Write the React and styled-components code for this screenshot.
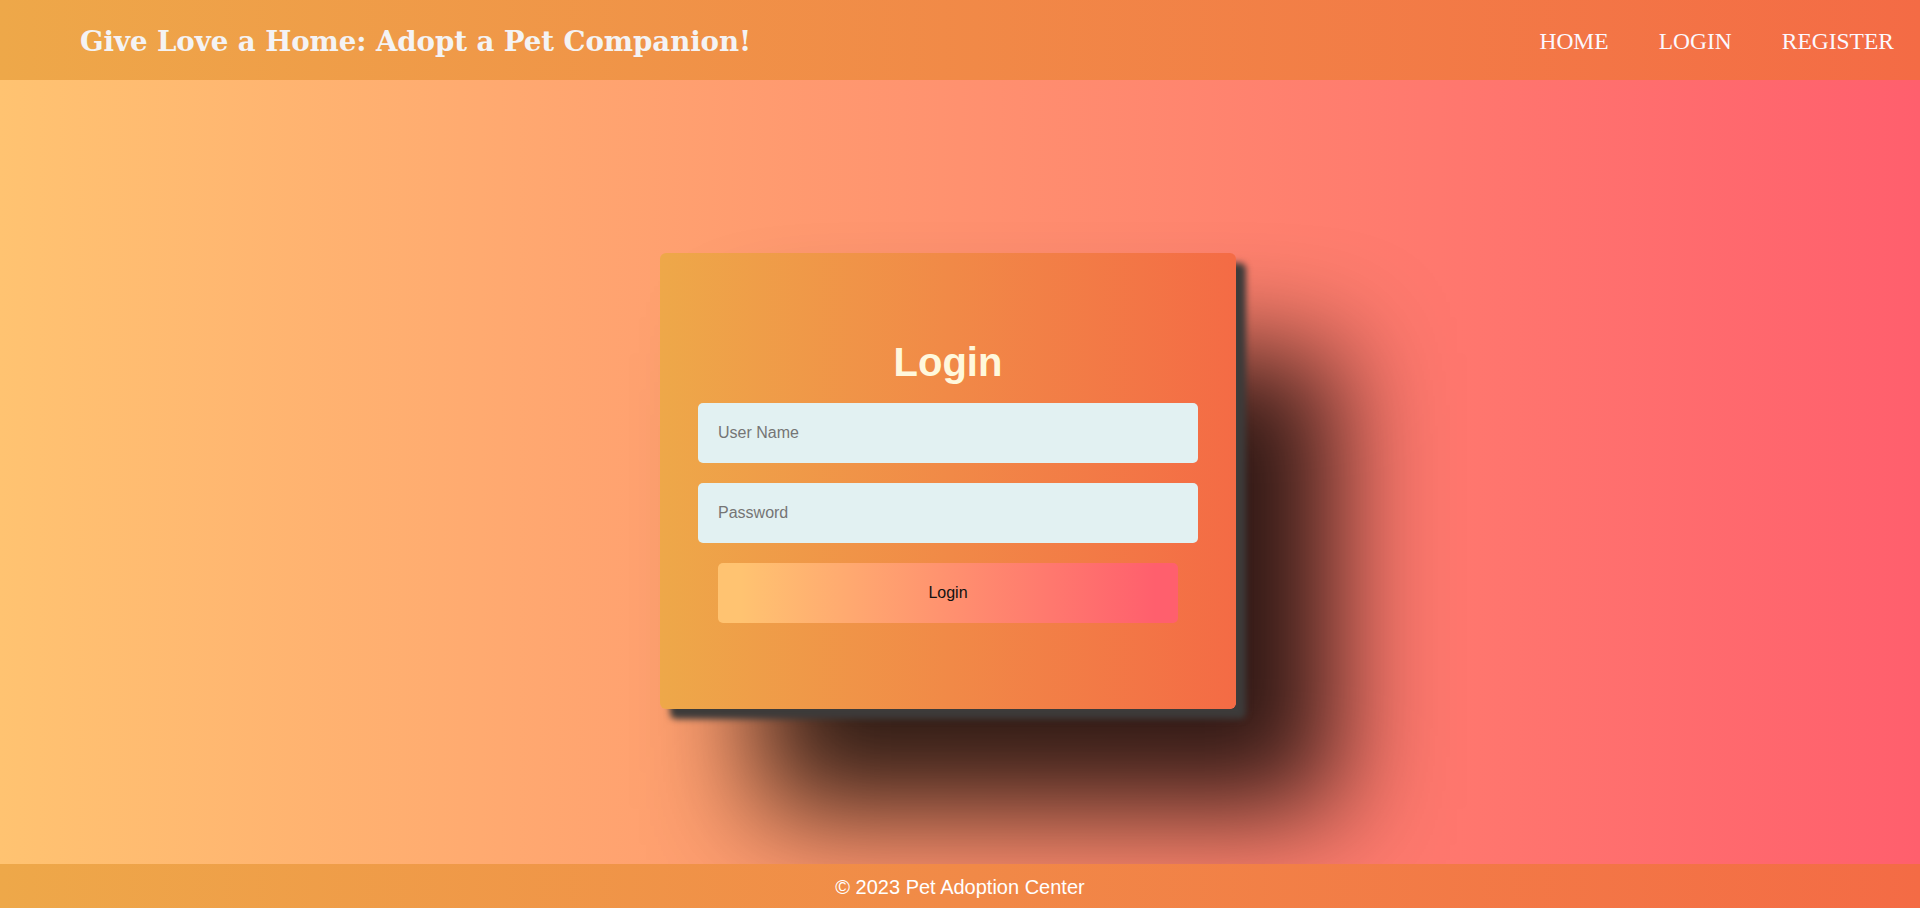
import React from "react";
import styled, { createGlobalStyle } from "styled-components";

const GlobalStyle = createGlobalStyle`
  * { box-sizing: border-box; }
  html, body { margin: 0; padding: 0; }
  body {
    font-family: "Liberation Sans", Arial, sans-serif;
    overflow: hidden;
  }
`;

const Page = styled.div`
  display: flex;
  flex-direction: column;
  height: 100vh;
  background: linear-gradient(to right, #ffc371, #ff5f6d);
`;

const Header = styled.header`
  display: flex;
  align-items: center;
  justify-content: space-between;
  height: 80px;
  padding: 3px 0 0 80px;
  background: linear-gradient(to right, #eea849, #f46b45);
`;

const Brand = styled.h1`
  margin: 0;
  font-family: "DejaVu Serif", Georgia, serif;
  font-weight: bold;
  font-size: 27.7px;
  letter-spacing: -0.1px;
  color: #f4f3f4;
`;

const Nav = styled.nav`
  display: flex;
  align-items: center;
  padding-right: 26px;
  gap: 50px;
`;

const NavLink = styled.a`
  font-family: "Liberation Serif", "Times New Roman", serif;
  font-size: 23.5px;
  color: #fbf8ff;
  text-decoration: none;
  cursor: pointer;
`;

const Main = styled.main`
  flex: 1;
  display: flex;
  align-items: center;
  justify-content: center;
  padding: 0 24px 0 0;
  overflow: hidden;
`;

const Card = styled.form`
  width: 576px;
  height: 456px;
  margin-top: 18px;
  padding: 67px 38px 48px;
  display: flex;
  flex-direction: column;
  align-items: center;
  border-radius: 6px;
  background: linear-gradient(to right, #eea849, #f46b45);
  box-shadow: 10px 10px 6px #3d3b3a, 100px 100px 110px rgba(0, 0, 0, 0.82);
`;

const Title = styled.h2`
  margin: 20px 0 18px;
  font-size: 40px;
  font-weight: bold;
  color: #fff8dc;
`;

const Input = styled.input`
  width: 100%;
  height: 60px;
  margin-bottom: 20px;
  padding: 0 20px;
  border: none;
  border-radius: 5px;
  background: #e2f1f2;
  font-family: "Liberation Sans", Arial, sans-serif;
  font-size: 16px;
  color: #333;
  outline: none;
  &::placeholder { color: #757575; }
`;

const Button = styled.button`
  width: 460px;
  height: 60px;
  border: none;
  border-radius: 5px;
  background: linear-gradient(to right, #ffc371 5%, #ff5f6d 95%);
  font-family: "Liberation Sans", Arial, sans-serif;
  font-size: 16px;
  color: #111;
  cursor: pointer;
`;

const Footer = styled.footer`
  height: 44px;
  display: flex;
  align-items: center;
  justify-content: center;
  padding-top: 3px;
  background: linear-gradient(to right, #eea849, #f46b45);
  color: #fff;
  font-size: 20px;
`;

export default function App() {
  return (
    <Page>
      <GlobalStyle />
      <Header>
        <Brand>Give Love a Home: Adopt a Pet Companion!</Brand>
        <Nav>
          <NavLink>HOME</NavLink>
          <NavLink>LOGIN</NavLink>
          <NavLink>REGISTER</NavLink>
        </Nav>
      </Header>
      <Main>
        <Card onSubmit={(e) => e.preventDefault()}>
          <Title>Login</Title>
          <Input type="text" placeholder="User Name" />
          <Input type="password" placeholder="Password" />
          <Button type="submit">Login</Button>
        </Card>
      </Main>
      <Footer>© 2023 Pet Adoption Center</Footer>
    </Page>
  );
}
